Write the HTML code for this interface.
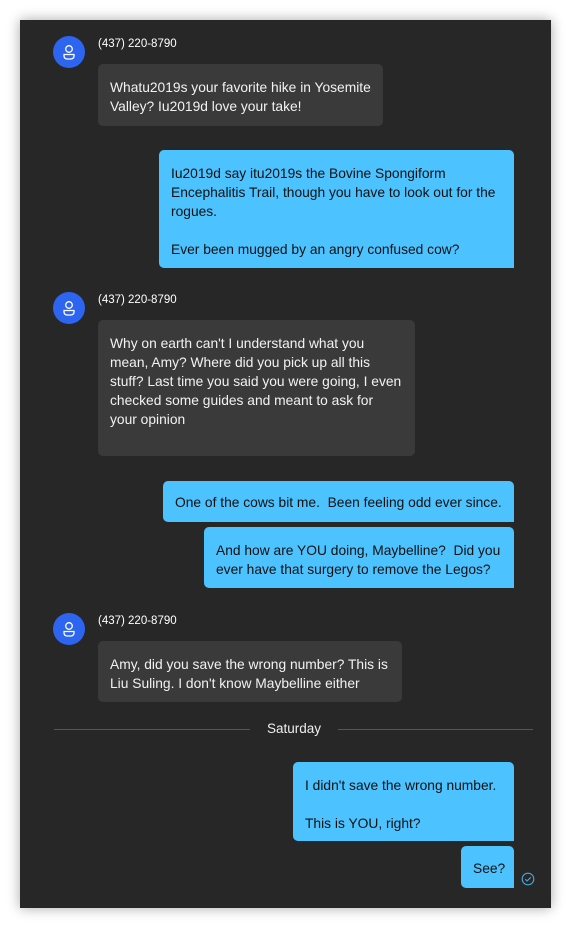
<!DOCTYPE html>
<html><head><meta charset="utf-8"><style>
body{margin:0;width:571px;height:928px;background:#fff;overflow:hidden;font-family:"Liberation Sans",sans-serif;}
.panel{position:absolute;left:20px;top:20px;width:531px;height:888px;background:#272727;box-shadow:0 0 12px rgba(0,0,0,.35);}
.a{position:absolute;width:32px;height:32px;border-radius:50%;background:#2d64f0;}
.n{position:absolute;left:98px;color:#fff;font-size:11.5px;}
.b{position:absolute;box-sizing:border-box;padding:0 12px;font-size:13.8px;line-height:19px;white-space:nowrap;border-radius:5px;}
.d{background:#3a3a3a;color:#f2f2f2;}
.u{background:#4cc2ff;color:#111;border-bottom-right-radius:0;}
.line{position:absolute;top:729px;height:1px;background:#555;}
</style></head><body>
<div class="panel"></div>
<svg width="0" height="0" style="position:absolute"><defs><g id="p"><circle cx="16" cy="13" r="3.3" fill="none" stroke="#fff" stroke-width="1.3"/><path d="M11 18.5h10v1.5a3 3 0 0 1-3 3h-4a3 3 0 0 1-3-3z" fill="none" stroke="#fff" stroke-width="1.3"/></g></defs></svg>
<svg class="a" style="left:53px;top:36px" viewBox="0 0 32 32"><use href="#p"/></svg>
<div class="n" style="top:38px">(437) 220-8790</div>
<div class="b d" style="left:98px;top:64px;width:285px;height:62px;padding-top:14px">Whatu2019s your favorite hike in Yosemite<br>Valley? Iu2019d love your take!</div>
<div class="b u" style="left:159px;top:150px;width:355px;height:118px;padding-top:14px">Iu2019d say itu2019s the Bovine Spongiform<br>Encephalitis Trail, though you have to look out for the<br>rogues.<br><br>Ever been mugged by an angry confused cow?</div>
<svg class="a" style="left:53px;top:292px" viewBox="0 0 32 32"><use href="#p"/></svg>
<div class="n" style="top:294px">(437) 220-8790</div>
<div class="b d" style="left:98px;top:320px;width:317px;height:136px;padding-top:14px">Why on earth can't I understand what you<br>mean, Amy? Where did you pick up all this<br>stuff? Last time you said you were going, I even<br>checked some guides and meant to ask for<br>your opinion</div>
<div class="b u" style="left:163px;top:481px;width:351px;height:41px;padding-top:12px">One of the cows bit me.&nbsp; Been feeling odd ever since.</div>
<div class="b u" style="left:204px;top:527px;width:310px;height:61px;padding-top:14px">And how are YOU doing, Maybelline?&nbsp; Did you<br>ever have that surgery to remove the Legos?</div>
<svg class="a" style="left:53px;top:613px" viewBox="0 0 32 32"><use href="#p"/></svg>
<div class="n" style="top:615px">(437) 220-8790</div>
<div class="b d" style="left:98px;top:641px;width:304px;height:61px;padding-top:14px">Amy, did you save the wrong number? This is<br>Liu Suling. I don't know Maybelline either</div>
<div class="line" style="left:54px;width:196px"></div>
<div class="line" style="left:338px;width:195px"></div>
<div style="position:absolute;left:250px;width:88px;top:721px;text-align:center;color:#eee;font-size:13.5px">Saturday</div>
<div class="b u" style="left:293px;top:762px;width:221px;height:79px;padding-top:14px">I didn't save the wrong number.<br><br>This is YOU, right?</div>
<div class="b u" style="left:461px;top:846px;width:53px;height:42px;padding-top:13px">See?</div>
<svg style="position:absolute;left:521px;top:872px" width="14" height="14" viewBox="0 0 14 14"><circle cx="7" cy="7" r="5.8" fill="none" stroke="#4ca6d8" stroke-width="1.1"/><path d="M4.3 7.2l1.8 1.8 3.7-3.7" fill="none" stroke="#4ca6d8" stroke-width="1.1"/></svg>
</body></html>
